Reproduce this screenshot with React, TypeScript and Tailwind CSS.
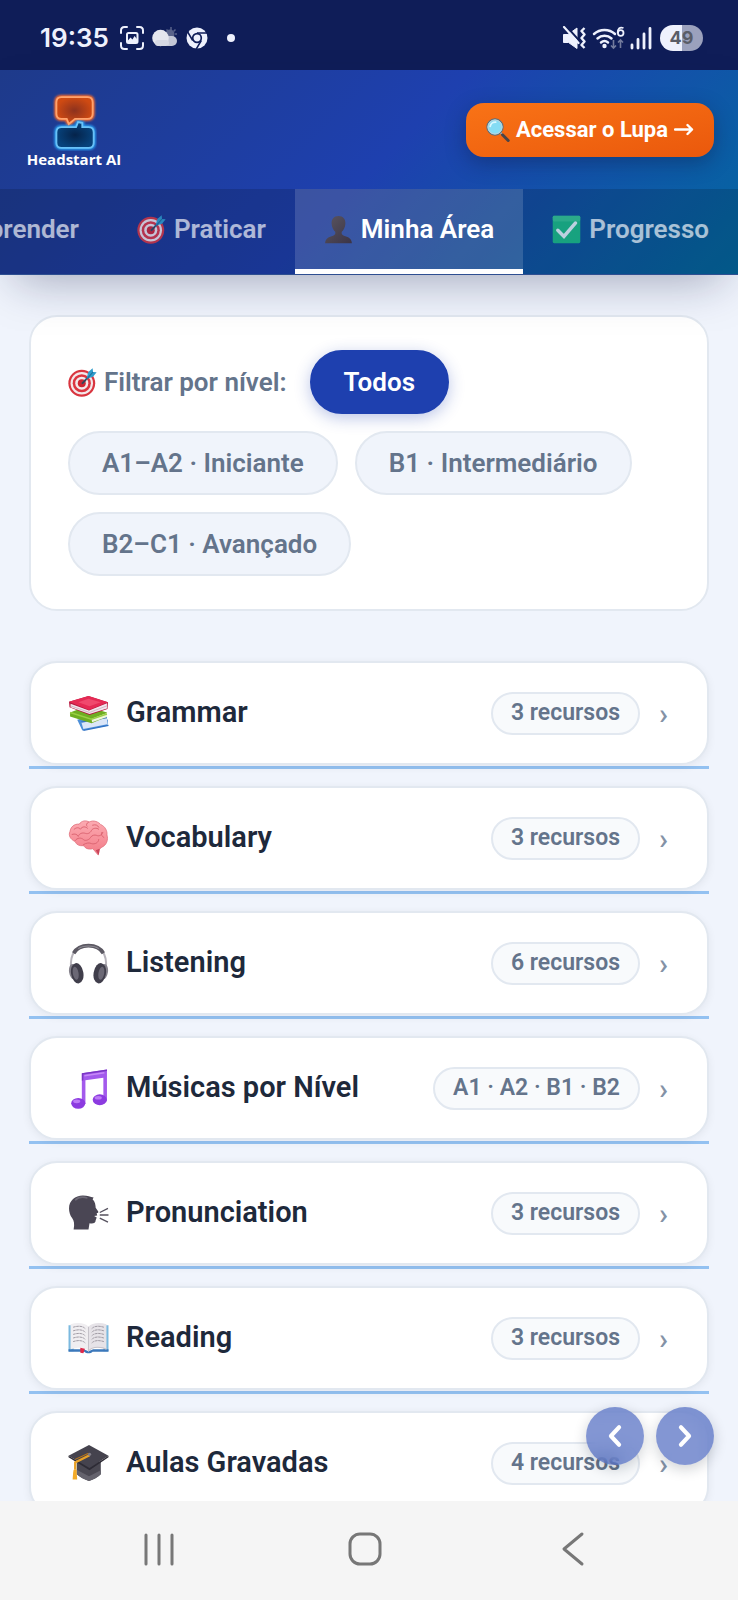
import { useState } from "react";
import type { ReactNode } from "react";

interface IconProps {
  className?: string;
}

interface Resource {
  name: string;
  badge: string;
  icon: (props: IconProps) => ReactNode;
}

function TargetIcon({ className }: IconProps) {
  return (
    <svg viewBox="0 0 40 40" className={className} aria-hidden="true">
      <circle cx="19" cy="21" r="18.5" fill="#d9353f" />
      <circle cx="19" cy="21" r="15.5" fill="#f3e8ea" />
      <circle cx="19" cy="21" r="12.5" fill="#dc3540" />
      <circle cx="19" cy="21" r="9" fill="#f3e8ea" />
      <circle cx="19" cy="21" r="5.500" fill="#cf2531" />
      <path d="M20 21 31 9" stroke="#2c5f80" strokeWidth="2.6" strokeLinecap="round" />
      <path d="M26 13 28 5.500 34 .5 34.500 5.500 39.500 6 34.500 12 27 14.500Z" fill="#2f9ccb" />
      <path d="M27 14 34.500 5.500" stroke="#1b6d99" strokeWidth="1.500" />
      <path d="M19.500 21.500 24.500 16.500" stroke="#3a4250" strokeWidth="2" />
    </svg>
  );
}

function PersonIcon({ className }: IconProps) {
  return (
    <svg viewBox="0 0 40 40" className={className} aria-hidden="true">
      <defs>
        <linearGradient id="person" x1="0" y1="0" x2="1" y2="1">
          <stop offset="0" stopColor="#5a5560" />
          <stop offset="1" stopColor="#3b3446" />
        </linearGradient>
      </defs>
      <path
        d="M20 1.500c-6.500 0-9.800 4.500-9.500 10.500.2 5 2.600 9 5 11 .6 3-.4 4.500-3 5.500C7 30.500 2 31.500 1.500 39h37c-.5-7.500-5.500-8.500-11-10.500-2.600-1-3.600-2.500-3-5.500 2.400-2 4.800-6 5-11 .3-6-3-10.500-9.500-10.500Z"
        fill="url(#person)"
      />
    </svg>
  );
}

function CheckIcon({ className }: IconProps) {
  return (
    <svg viewBox="0 0 40 40" className={className} aria-hidden="true">
      <rect x="1" y="1" width="38" height="38" rx="2" fill="#1bb87c" />
      <rect x="1" y="1" width="38" height="8" rx="2" fill="#45c993" opacity=".6" />
      <path d="m8 21 8.500 8.500L32.500 11" fill="none" stroke="#e8f2f5" strokeWidth="4.800" strokeLinecap="round" />
    </svg>
  );
}

function SearchIcon({ className }: IconProps) {
  return (
    <svg viewBox="0 0 40 40" className={className} aria-hidden="true">
      <path d="m23 23 5.500 6" stroke="#b8bec2" strokeWidth="3" />
      <path d="m27.500 28 9.500 9.500" stroke="#4a4448" strokeWidth="5" strokeLinecap="round" />
      <circle cx="15" cy="15" r="13.500" fill="#85dcf4" stroke="#596b78" strokeWidth="1.800" />
      <circle cx="15" cy="15" r="11.800" fill="none" stroke="#c4d0d6" strokeWidth="1.600" />
      <path d="M7 14a8.500 8.500 0 0 1 9-7" fill="none" stroke="#d8f7ff" strokeWidth="3" strokeLinecap="round" />
    </svg>
  );
}

function BooksIcon({ className }: IconProps) {
  return (
    <svg viewBox="0 0 40 40" className={className} aria-hidden="true">
      <path d="m9 26 19-5 11 5-.5 6L14 36.500 9 26Z" fill="#4d8fd8" />
      <path d="m13 28.500 25-4.500 .3 6.500L15 35Z" fill="#dbe6f8" />
      <path d="m13 28.500 25-4.500M15 36.500l24.500-5" stroke="#3273c5" strokeWidth="1.300" fill="none" />
      <path d="M2 19 18 13l20 6-.500 4.500L23 29.500 2 23Z" fill="#6eae22" />
      <path d="m23 25 15-5.500v4L23.500 28.500Z" fill="#eef4dc" />
      <path d="m2 19 21 6.500 15-5" stroke="#98cf42" strokeWidth="1.500" fill="none" />
      <path d="M1 8.500 20 3l19 6-.5 6.500L21 21.500 1.500 14Z" fill="#b5163e" />
      <path d="m2.500 10.500 18 6.500L38 10v5l-17 5.500L2.500 14Z" fill="#f2e5ec" />
      <path d="m2.500 12.500 18.500 6.500 17-6.500" stroke="#c5a7b7" strokeWidth=".7" fill="none" />
      <path d="M1 8.500 20 3l19 6-18.500 7.500Z" fill="#e52a54" />
      <path d="m10 9 10-3.500L32 9l-11 4Z" fill="#f75f7e" opacity=".6" />
    </svg>
  );
}

function BrainIcon({ className }: IconProps) {
  return (
    <svg viewBox="0 0 40 40" className={className} aria-hidden="true">
      <defs>
        <linearGradient id="brain" x1="0" y1="0" x2="0" y2="1">
          <stop offset="0" stopColor="#fcabb2" />
          <stop offset="1" stopColor="#f27a86" />
        </linearGradient>
      </defs>
      <path
        d="M11 6C13 2.500 18 2 20.500 4 25 1.500 30 4 32 6.500c4 1.500 6.500 6 6 10 1.500 5-.5 10-5 12l-2.500 2-1 5.500c-1.500-1-3-4-5.500-6-4 1-7.500-.5-8.500-3-4.500.5-7.500-1-8.500-4C2.500 21 0 17 2 13c.5-4 4-7.500 9-7Z"
        fill="url(#brain)"
        stroke="#e0707c"
        strokeWidth=".8"
      />
      <path
        d="M6 11c2-2 5-2 6 0 2-3 5-3 7-1M20 4c-2 1-2.500 3-1.500 4M24 7c3-1 5 0 6 2M4 16c3-1 5 0 6 2 1-3 4-4 7-3s5-1 6-3 5-3 7-1M7 22c2-3 6-3 8-1s6 0 7-2 4-3 6-2 5 0 6-3M15 26c3-2 6-2 8-1 3 1 7-1 7-4M33 14c-1 2 0 4 2 5"
        fill="none"
        stroke="#d9626f"
        strokeWidth=".9"
        strokeLinecap="round"
      />
      <path d="M27 31.500 30 36l1-6Z" fill="#c9465a" />
    </svg>
  );
}

function HeadphonesIcon({ className }: IconProps) {
  return (
    <svg viewBox="0 0 40 40" className={className} aria-hidden="true">
      <path d="M3 25C1.500 10 8 2.500 20 2.500S38.500 10 37 25" fill="none" stroke="#b7b4bb" strokeWidth="2" />
      <path d="M5.500 10C8.500 4.500 13 2.500 20 2.500s11.500 2 14.500 7.500" fill="none" stroke="#5c5963" strokeWidth="3.600" />
      <path d="M10 5.500c3-2 6-2.500 10-2.500s7 .5 10 2.500" fill="none" stroke="#8f8d96" strokeWidth="1" />
      <ellipse cx="5" cy="28" rx="4" ry="7.500" fill="#85828c" transform="rotate(-8 5 28)" />
      <ellipse cx="35" cy="28" rx="4" ry="7.500" fill="#85828c" transform="rotate(8 35 28)" />
      <ellipse cx="9" cy="29.500" rx="6" ry="10" fill="#403e4b" transform="rotate(-10 9 29.500)" />
      <ellipse cx="31" cy="29.500" rx="6" ry="10" fill="#403e4b" transform="rotate(10 31 29.500)" />
      <ellipse cx="7.500" cy="29.500" rx="2.800" ry="6.500" fill="#6b6875" transform="rotate(-10 7.500 29.500)" />
      <ellipse cx="32.500" cy="29.500" rx="2.800" ry="6.500" fill="#6b6875" transform="rotate(10 32.500 29.500)" />
    </svg>
  );
}

function MusicIcon({ className }: IconProps) {
  return (
    <svg viewBox="0 0 40 40" className={className} aria-hidden="true">
      <path d="M13.500 5 38 1.500v31h-3.500V9.500L17 12v23h-3.500Z" fill="#a35aec" />
      <path d="M13.500 5 38 1.500V3L15 6.300V12l-1.500.5Z" fill="#7a35c4" />
      <path d="m16 7.500 19.500-2.800" stroke="#c78af8" strokeWidth="1.500" />
      <ellipse cx="10" cy="34.500" rx="6.900" ry="5.300" fill="#8c3be0" />
      <ellipse cx="31" cy="31" rx="6.900" ry="5.300" fill="#8c3be0" />
      <ellipse cx="8.500" cy="32.500" rx="3.500" ry="1.800" fill="#bd7bf6" />
      <ellipse cx="29.500" cy="29" rx="3.500" ry="1.800" fill="#bd7bf6" />
    </svg>
  );
}

function SpeakingIcon({ className }: IconProps) {
  return (
    <svg viewBox="0 0 40 40" className={className} aria-hidden="true">
      <path
        d="M5.500 35.500c1-5 .5-8-1.500-11C2 21.500 1 18.500 1 15 1 7.500 7 2.500 14.500 2.500c4.500 0 7.500 1.500 10.500 2l-1 1.500c2.500 2.500 3 6 3 8.500l2.500 3.500c.5 1-.5 1.500-1.500 1.500l.5 2.500-3 .5 2.500 1.500-1 2.500c0 3-2.500 3.500-6 3l-1 6Z"
        fill="#4a4654"
      />
      <path d="M7 7c3-3 8-3.500 12-2" fill="none" stroke="#6d6976" strokeWidth="1.500" />
      <path d="m31 19 8-4M31 21.500h8.500M31 24.500l8 4" stroke="#55515e" strokeWidth="1.300" />
    </svg>
  );
}

function BookIcon({ className }: IconProps) {
  return (
    <svg viewBox="0 0 40 40" className={className} aria-hidden="true">
      <path d="M.5 7h5v25.500h-5ZM34.500 7h5v25.500h-5Z" fill="#7bb9df" />
      <path d="M.5 30.500h15l4.500 2 4.500-2h15V33H24c-2 2-6 2-8 0H.5Z" fill="#3b78bb" />
      <path d="M2.500 6C10 4 17 5 20 8.500V32C16 28 9 28.500 2.500 30.500Z" fill="#f0eef1" />
      <path d="M37.500 6C30 4 23 5 20 8.500V32c4-4 11-3.500 17.500-1.500Z" fill="#e6e3e8" />
      <path d="M20 8.500V32c3-3.500 9-4 14-3l3.500 1.500" fill="none" stroke="#c6c3ca" strokeWidth="1" />
      <path
        d="M5 9c5-1.500 9-1.500 12 1.500M5 12.500c5-1.500 9-1.500 12 1.500M5 16c5-1.500 9-1.500 12 1.500M5 19.500c5-1.500 9-1.500 12 1.500M5 23c5-1.500 9-1.500 12 1.500M35 9c-5-1.500-9-1.500-12 1.500M35 12.500c-5-1.500-9-1.500-12 1.500M35 16c-5-1.500-9-1.500-12 1.500M35 19.500c-5-1.500-9-1.500-12 1.500M35 23c-5-1.500-9-1.500-12 1.500"
        fill="none"
        stroke="#99949d"
        strokeWidth=".9"
        strokeDasharray="2.500 .6"
      />
      <path d="m12 29 4.500 1-1.500 4.500-3-.5Z" fill="#df2949" />
    </svg>
  );
}

function GraduationIcon({ className }: IconProps) {
  return (
    <svg viewBox="0 0 40 40" className={className} aria-hidden="true">
      <path d="M8.500 18v12.500c3 3 8 5 12 6.500 4-1.500 9-3.500 11.500-6.500V18Z" fill="#4a4852" />
      <path d="M8.500 26v4.500c3 3 8 5 12 6.500 4-1.500 9-3.500 11.500-6.500v-4l-11.500 6Z" fill="#65636d" />
      <path d="M.5 12.500 20.500 2l19 10.500L21 24.500Z" fill="#45434e" />
      <path d="M.5 12.500v1.500L21 26.500l18.500-12.500v-1.500L21 24.500Z" fill="#2d2b35" />
      <path d="m21 12-14 7v7" fill="none" stroke="#e9a127" strokeWidth="2.200" />
      <path d="m20 10-13 6" stroke="#bd7716" strokeWidth="1" />
      <path d="M5.500 26h3v3l.5 6.500H4.500L5 29Z" fill="#f4ab28" />
      <circle cx="21" cy="11" r="1.600" fill="#807d87" />
    </svg>
  );
}

const tabs = [
  { name: "Aprender", icon: null },
  { name: "Praticar", icon: TargetIcon },
  { name: "Minha Área", icon: PersonIcon },
  { name: "Progresso", icon: CheckIcon },
];

const levels = ["Todos", "A1–A2 · Iniciante", "B1 · Intermediário", "B2–C1 · Avançado"];

const resources: Resource[] = [
  { name: "Grammar", badge: "3 recursos", icon: BooksIcon },
  { name: "Vocabulary", badge: "3 recursos", icon: BrainIcon },
  { name: "Listening", badge: "6 recursos", icon: HeadphonesIcon },
  { name: "Músicas por Nível", badge: "A1 · A2 · B1 · B2", icon: MusicIcon },
  { name: "Pronunciation", badge: "3 recursos", icon: SpeakingIcon },
  { name: "Reading", badge: "3 recursos", icon: BookIcon },
  { name: "Aulas Gravadas", badge: "4 recursos", icon: GraduationIcon },
];

function StatusBar() {
  return (
    <div className="flex h-[70px] shrink-0 items-center justify-between bg-[#0f1d58] pt-1.5 pr-[35px] pl-10 text-[#eef1fd]">
      <div className="flex items-center">
        <span className="font-[Inter,sans-serif] text-[26px] leading-8 font-semibold">19:35</span>
        <svg viewBox="0 0 24 24" className="ml-[11px] size-6" fill="none" stroke="currentColor" strokeWidth="2" strokeLinecap="round" aria-hidden="true">
          <path d="M1 7V4.500Q1 1 4.500 1H7M17 1h2.500Q23 1 23 4.500V7M23 17v2.500q0 3.500-3.500 3.500H17M7 23H4.500Q1 23 1 19.500V17" />
          <rect x="7" y="7" width="10.500" height="10" rx="1.500" />
          <path d="m7.500 15 3-3.500 2 2 2-3.500 2.500 3v3.500h-9Z" fill="currentColor" stroke="none" />
        </svg>
        <svg viewBox="0 0 26 24" className="ml-2 h-6 w-[26px]" aria-hidden="true">
          <circle cx="18" cy="8" r="4.500" fill="#59638a" />
          <path d="M19 1v3M25 8h-2M23.500 3.500l-2 2M14.500 3.500l2 2" stroke="#59638a" strokeWidth="1.500" />
          <rect x="11" y="10" width="14" height="10" rx="5" fill="#c3c7d6" />
          <circle cx="8.500" cy="12" r="8.300" fill="#e5e7ee" />
          <rect x="3" y="14" width="14" height="6" rx="3" fill="#d6d9e4" />
        </svg>
        <svg viewBox="0 0 22 22" className="ml-2 size-[22px]" fill="none" stroke="#eef1fd" aria-hidden="true">
          <circle cx="11" cy="11" r="10.500" fill="#eef1fd" stroke="none" />
          <path d="M11 6h10M6.700 13.500l-5-8.500M15.300 13.500 10.300 22" stroke="#0f1d58" strokeWidth="1.500" />
          <circle cx="11" cy="11" r="4.300" fill="#eef1fd" stroke="#0f1d58" strokeWidth="1.700" />
        </svg>
        <span className="ml-[19px] size-2 rounded-full bg-[#eef1fd]" />
      </div>

      <div className="flex items-center">
        <svg viewBox="0 0 24 24" className="size-6" fill="none" stroke="currentColor" aria-hidden="true">
          <path d="M1.500 8.500H6L15 2v20.500L6.500 16.500h-5Z" fill="currentColor" stroke="currentColor" strokeWidth="1" strokeLinejoin="round" />
          <path d="m4 0 14 15.500" stroke="#0f1d58" strokeWidth="2" />
          <path d="m2 1 14.500 16" strokeWidth="2.200" strokeLinecap="round" />
          <path d="m22.500 2-3 3 3 3.500-3 3.500 3 3.500-3 3.500 3 3" strokeWidth="2.400" strokeLinejoin="round" />
        </svg>
        <svg viewBox="0 0 34 24" className="ml-1.5 h-6 w-[34px]" fill="none" stroke="currentColor" aria-hidden="true">
          <path d="M2 8a16 16 0 0 1 21 0M5.500 12.500a10.500 10.500 0 0 1 14 0M9 16.500a5.500 5.500 0 0 1 7 0" strokeWidth="2.500" strokeLinecap="round" />
          <circle cx="12.500" cy="20" r="2.200" fill="currentColor" stroke="none" />
          <path d="M31.500 2c-4-1.500-5.800 1-5.800 5" strokeWidth="1.800" />
          <circle cx="28.700" cy="7" r="2.800" strokeWidth="1.800" />
          <path d="M21.500 14v8m-2.500-2.500 2.500 2.500 2.500-2.500M28.500 22v-8m-2.500 2.500 2.500-2.500 2.500 2.500" stroke="#737b9d" strokeWidth="1.600" />
        </svg>
        <svg viewBox="0 0 22 24" className="ml-1 h-6 w-[22px]" stroke="currentColor" strokeWidth="2.800" strokeLinecap="round" aria-hidden="true">
          <path d="M2 19v3M8 13.500V22M14 8v14M20 2.500V22" />
        </svg>
        <span className="ml-2 flex h-[26px] w-[43px] items-center justify-center rounded-full bg-linear-to-r from-[#eef1fd] from-50% to-[#9ba1bd] to-50% font-[Inter,sans-serif] text-[18px] leading-6 font-bold text-[#5a5d68]">
          49
        </span>
      </div>
    </div>
  );
}

function Logo() {
  return (
    <a href="#" className="flex w-24 flex-col items-center">
      <svg viewBox="0 0 44 56" className="h-[58px] w-[46px]" aria-hidden="true">
        <defs>
          <radialGradient id="orange">
            <stop offset="0" stopColor="#8d321e" />
            <stop offset="1" stopColor="#cf4a12" />
          </radialGradient>
          <radialGradient id="navy">
            <stop offset="0" stopColor="#05234a" />
            <stop offset="1" stopColor="#07427b" />
          </radialGradient>
          <filter id="glow" x="-20%" y="-20%" width="140%" height="140%">
            <feGaussianBlur stdDeviation="1.200" />
          </filter>
        </defs>
        <path d="M10 4h25q5 0 5 5v11q0 5-5 5H23l-6 5-2-5h-5q-5 0-5-5V9q0-5 5-5Z" fill="none" stroke="#ff6a28" strokeWidth="4" filter="url(#glow)" />
        <path d="M10 33h14l2-5 4 1v4h6q5 0 5 5v10q0 5-5 5H10q-5 0-5-5V38q0-5 5-5Z" fill="none" stroke="#279cf0" strokeWidth="4" filter="url(#glow)" />
        <path d="M10 4h25q5 0 5 5v11q0 5-5 5H23l-6 5-2-5h-5q-5 0-5-5V9q0-5 5-5Z" fill="url(#orange)" stroke="#ffa26c" strokeWidth="1.800" />
        <path d="M10 33h14l2-5 4 1v4h6q5 0 5 5v10q0 5-5 5H10q-5 0-5-5V38q0-5 5-5Z" fill="url(#navy)" stroke="#69c1f7" strokeWidth="1.800" />
      </svg>
      <span className="font-['Open_Sans',sans-serif] text-[15px] leading-4 font-bold whitespace-nowrap text-white">Headstart AI</span>
    </a>
  );
}

function Header() {
  const [active, setActive] = useState("Minha Área");

  return (
    <header className="relative z-10 shrink-0 bg-[linear-gradient(135deg,#1e3a8a_0%,#1e40af_50%,#0369a1_100%)] shadow-[0_20px_45px_-15px_rgba(15,23,70,0.35)]">
      <div className="flex h-[119px] items-center justify-between pr-6 pl-[26px]">
        <Logo />
        <a
          href="#"
          className="flex h-[54px] items-center gap-1.5 rounded-[18px] bg-linear-to-br from-[#f97316] to-[#ea580c] px-5 text-[22px] font-bold text-white shadow-[0_6px_20px_rgba(15,23,60,0.35)]"
        >
          <SearchIcon className="size-6" />
          <span>Acessar o Lupa</span>
          <svg viewBox="0 0 20 16" className="h-4 w-5" fill="none" stroke="currentColor" strokeWidth="2.400" strokeLinecap="round" strokeLinejoin="round" aria-hidden="true">
            <path d="M1 7.500h17M13.500 3 18 7.500 13.500 12" />
          </svg>
        </a>
      </div>

      <nav className="flex justify-end overflow-hidden border-b border-[#2e4f91] bg-black/15">
        {tabs.map(({ name, icon: Icon }) => (
          <button
            key={name}
            type="button"
            onClick={() => setActive(name)}
            className={
              name === active
                ? "flex h-[85px] shrink-0 items-center gap-2 border-b-5 border-white bg-white/15 px-[29px] text-[26px] font-semibold text-white"
                : "flex h-[85px] shrink-0 items-center gap-2 border-b-5 border-transparent px-[29px] text-[26px] font-semibold text-white/65"
            }
          >
            {Icon && <Icon className={name === active ? "size-[29px]" : "size-[29px] opacity-80"} />}
            {name}
          </button>
        ))}
      </nav>
    </header>
  );
}

function LevelFilter() {
  const [level, setLevel] = useState("Todos");

  return (
    <section className="flex flex-wrap items-center gap-[17px] rounded-[28px] border-2 border-[#e2e8f0] bg-white px-[37px] py-[33px]">
      <span className="mr-1.5 flex items-center gap-[7px] text-[26px] font-semibold text-[#64748b]">
        <TargetIcon className="size-[29px]" />
        Filtrar por nível:
      </span>
      {levels.map((item) => (
        <button
          key={item}
          type="button"
          onClick={() => setLevel(item)}
          className={
            item === level
              ? "h-16 rounded-full border-2 border-[#1e40af] bg-[#1e40af] px-8 text-[26px] font-semibold text-white shadow-[0_4px_16px_rgba(30,64,175,0.3)]"
              : "h-16 rounded-full border-2 border-[#e2e8f0] bg-[#f0f4fb] px-8 text-[26px] font-semibold text-[#64748b]"
          }
        >
          {item}
        </button>
      ))}
    </section>
  );
}

function ResourceRow({ name, badge, icon: Icon }: Resource) {
  return (
    <li className="border-b-3 border-[#93c1f1] pb-px">
      <button
        type="button"
        className="flex h-[104px] w-full items-center rounded-[28px] border-2 border-[#e2e8f0] bg-white px-[37px] text-left shadow-[0_2px_8px_rgba(15,23,42,0.06)]"
      >
        <Icon className="size-[41px] shrink-0" />
        <span className="ml-[17px] flex-1 text-[29px] font-semibold text-[#1e293b]">{name}</span>
        <span className="flex h-[43px] items-center rounded-full border-2 border-[#e2e8f0] bg-[#f8fafc] px-[18px] text-[23px] font-semibold text-[#64748b]">
          {badge}
        </span>
        <span className="ml-[17px] w-[13px] text-center text-[30px] font-medium text-[#8492a6]">›</span>
      </button>
    </li>
  );
}

function SystemNav() {
  return (
    <nav className="flex h-[99px] shrink-0 items-center justify-center gap-[166px] bg-[#f5f5f5] pr-2 pb-1 text-[#777777]">
      <button type="button" aria-label="Recentes">
        <svg viewBox="0 0 40 40" className="size-10" stroke="currentColor" strokeWidth="3" strokeLinecap="round">
          <path d="M7 6v29M20 6v29M33 6v29" />
        </svg>
      </button>
      <button type="button" aria-label="Início">
        <svg viewBox="0 0 40 40" className="size-10" fill="none" stroke="currentColor" strokeWidth="3">
          <rect x="5" y="5" width="30" height="30" rx="10" />
        </svg>
      </button>
      <button type="button" aria-label="Voltar">
        <svg viewBox="0 0 40 40" className="size-10" fill="none" stroke="currentColor" strokeWidth="3" strokeLinecap="round" strokeLinejoin="round">
          <path d="M31 5 13 20l18 15" />
        </svg>
      </button>
    </nav>
  );
}

export default function App() {
  return (
    <div className="flex h-screen flex-col overflow-hidden bg-[#f0f4fc] font-[Roboto,sans-serif]">
      <StatusBar />
      <Header />

      <main className="relative min-h-0 flex-1 overflow-hidden px-[29px] pt-10">
        <LevelFilter />

        <ul className="mt-[50px] flex flex-col gap-[17px]">
          {resources.map((resource) => (
            <ResourceRow key={resource.name} {...resource} />
          ))}
        </ul>

        {/* Page navigation, floats over the list */}
        <div className="absolute right-6 bottom-9 flex gap-3">
          <button
            type="button"
            aria-label="Anterior"
            className="flex size-[58px] items-center justify-center rounded-full bg-[#1e40af]/55 text-white shadow-[0_4px_14px_rgba(15,23,42,0.2)] backdrop-blur-sm"
          >
            <svg viewBox="0 0 24 24" className="size-7" fill="none" stroke="currentColor" strokeWidth="3.500" strokeLinecap="round" strokeLinejoin="round">
              <path d="m15.500 4.500-7 7.500 7 7.500" />
            </svg>
          </button>
          <button
            type="button"
            aria-label="Próximo"
            className="flex size-[58px] items-center justify-center rounded-full bg-[#1e40af]/55 text-white shadow-[0_4px_14px_rgba(15,23,42,0.2)] backdrop-blur-sm"
          >
            <svg viewBox="0 0 24 24" className="size-7" fill="none" stroke="currentColor" strokeWidth="3.500" strokeLinecap="round" strokeLinejoin="round">
              <path d="m8.500 4.500 7 7.500-7 7.500" />
            </svg>
          </button>
        </div>
      </main>

      <SystemNav />
    </div>
  );
}
